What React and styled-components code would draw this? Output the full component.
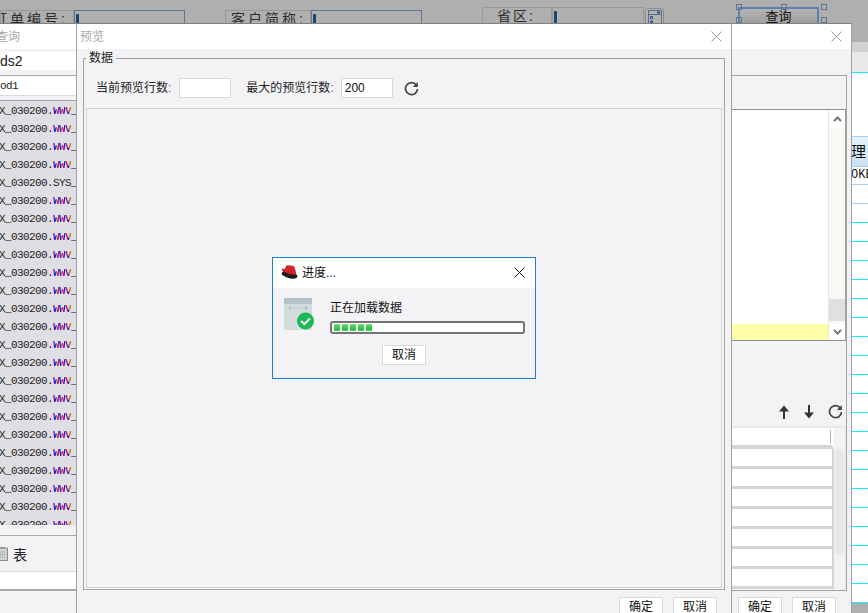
import styled, { createGlobalStyle } from "styled-components"

const GlobalStyle = createGlobalStyle`
    html, body {
        margin: 0;
        padding: 0;
        background: #afafaf;
    }
    * {
        box-sizing: border-box;
    }
`

const rows = Array.from({ length: 24 }, (_, i) => (i === 4 ? "SYS_" : "WWV_"))
const gridLines = Array.from({ length: 21 }, (_, i) => i)
const tableRows = [21, 20, 20, 20, 20, 20, 20, 20]

const Refresh = ({ size = 15 }) => (
    <svg width={size} height={size} viewBox="0 0 15 15">
        <path d="M12.4 4.2 A6 6 0 1 0 13.5 8" fill="none" stroke="#444" strokeWidth="1.7" />
        <path d="M13.8 1 V6 H8.8 Z" fill="#444" />
    </svg>
)

const Cross = ({ color = "#999", size = 11 }) => (
    <svg width={size} height={size} viewBox="0 0 11 11">
        <path d="M0.5 0.5 L10.5 10.5 M10.5 0.5 L0.5 10.5" stroke={color} strokeWidth="1" fill="none" />
    </svg>
)

const ArrowUp = () => (
    <svg width="12" height="14" viewBox="0 0 12 14">
        <path d="M6 0.5 L11 6.5 H7 V14 H5 V6.5 H1 Z" fill="#333" />
    </svg>
)

const ArrowDown = () => (
    <svg width="12" height="14" viewBox="0 0 12 14">
        <path d="M6 13.5 L11 7.5 H7 V0 H5 V7.5 H1 Z" fill="#333" />
    </svg>
)

const Chevron = ({ down }) => (
    <svg width="9" height="6" viewBox="0 0 9 6">
        <path d={down ? "M1 1 L4.5 4.5 L8 1" : "M1 5 L4.5 1.5 L8 5"} stroke="#777" strokeWidth="2" fill="none" />
    </svg>
)

const RedHat = () => (
    <svg width="17" height="15" viewBox="0 0 17 15">
        <path d="M1 7.5 C0 9 1 10 3 11 C7 13.5 13 15 16 12.5 C17 11 16 9 14 8.5 L3 5.5 Z" fill="#1b1b1b" />
        <path d="M5.5 0.6 C7.5 -0.4 9.5 1 11 0.6 C13 0.2 14.4 3.6 15 7.6 C15.2 9.6 13.6 10 12 9.6 C8 8.8 4.5 7.6 2.5 6.5 C0.8 5.6 0.4 4 1.2 3.2 C3 4.6 3.8 4.2 4.2 3 Z" fill="#d1232a" />
    </svg>
)

const StatusIcon = () => (
    <svg width="31" height="33" viewBox="0 0 31 33">
        <rect x="0" y="0" width="28" height="32" fill="#d5dce0" />
        <rect x="0" y="0" width="28" height="6" fill="#b6c3c9" />
        <path d="M5 10 H23" stroke="#b4bec3" strokeWidth="1" strokeDasharray="2 1" />
        <path d="M7 7.8 L4 10 L7 12.2 Z M21 7.8 L24 10 L21 12.2 Z" fill="#b4bec3" />
        <circle cx="21.5" cy="23" r="8.5" fill="#1bb956" />
        <path d="M17 23 L20.3 26.2 L26 20.5" stroke="#fff" strokeWidth="2" fill="none" />
    </svg>
)

const DocIcon = () => (
    <svg width="9" height="15" viewBox="0 0 9 15">
        <path d="M-2 2 H7.5 V14.5 H-2 Z" fill="#d4d4d4" stroke="#888" strokeWidth="1" />
        <path d="M0 1 H5 V3 H0 Z" fill="#999" />
        <path d="M0 6 H6 M0 8.5 H6 M0 11 H6" stroke="#8a8a8a" strokeWidth="1" strokeDasharray="1 1" />
    </svg>
)

const FormIcon = () => (
    <svg width="19" height="20" viewBox="0 0 19 20">
        <rect x="0.5" y="0.5" width="18" height="19" rx="2" fill="#b4b4b4" stroke="#8d8d8d" />
        <rect x="3.5" y="2.5" width="13" height="15" fill="none" stroke="#56708f" />
        <path d="M3.5 6.5 H16.5" stroke="#56708f" />
        <rect x="12" y="3.5" width="3" height="2" fill="#2b4c70" />
        <rect x="5.5" y="8.5" width="2" height="2" fill="none" stroke="#3f5c7f" />
        <rect x="5.5" y="13" width="2" height="2" fill="none" stroke="#3f5c7f" />
    </svg>
)

export default function App() {
    return (
        <Desktop>
            <GlobalStyle />

            <FormStrip>
                <FieldLabel $width={74} $top={10} $indent={-8} $spacing={3}>订单编号:</FieldLabel>
                <FieldInput $width={111} $top={10}><Caret /></FieldInput>
                <FieldLabel $width={86} $top={10} $gap={40} $indent={5} $spacing={3}>客户简称:</FieldLabel>
                <FieldInput $width={111} $top={10}><Caret /></FieldInput>
                <FieldLabel $width={70} $top={7} $gap={60} $indent={14} $spacing={2}>省区:</FieldLabel>
                <FieldInput $width={92} $top={7} $plain><Caret /></FieldInput>
                <IconSlot><FormIcon /></IconSlot>
                <DesignButton>
                    查询
                    <Handle $x={-4} $y={-5} />
                    <Handle $x={41} $y={-5} />
                    <Handle $x={81} $y={-5} />
                    <Handle $x={-4} $y={8} />
                    <Handle $x={81} $y={8} />
                </DesignButton>
            </FormStrip>

            <SideGrid>
                <SideBand $height={10} $color="#d2d2d2" />
                <SideBand $height={20} $color="#e9e9e9" />
                <SideLine $color="#16f0f5" />
                <SideBand $height={63} $color="#fff" />
                <SideLine $color="#a6d2f6" />
                <SideHeader>理</SideHeader>
                <SideLine $color="#a6d2f6" />
                <SideCell>OKE</SideCell>
                <SideLine $color="#a6d2f6" />
                <SideBand $height={18} $color="#fff" />
                <SideLine $color="#a6d2f6" />
                {gridLines.map((i) => (
                    <GridLineRow key={i}>
                        <SideBand $height={18} $color="#fff" />
                        <SideLine $color="#16f0f5" />
                    </GridLineRow>
                ))}
            </SideGrid>

            <QueryWindow>
                <TitleBar>
                    <GhostTitle $shift={-4}>查询</GhostTitle>
                    <Cross />
                </TitleBar>
                <QueryBody>
                    <LeftPane>
                        <NameField>ds2</NameField>
                        <ModField>od1</ModField>
                        <ObjectList>
                            {rows.map((name, i) => (
                                <ObjectRow key={i}>
                                    X_030200.
                                    {name === "WWV_" ? <Rainbow>WWV</Rainbow> : "SYS"}_
                                </ObjectRow>
                            ))}
                        </ObjectList>
                        <TypeRow>
                            <DocIcon />
                            表
                        </TypeRow>
                        <WhiteField />
                    </LeftPane>
                    <RightPane>
                        <OuterGroup>
                            <SqlBox>
                                <SqlText>
                                    <SqlEmpty />
                                    <SqlSelected />
                                </SqlText>
                                <Scrollbar>
                                    <ScrollButton><Chevron /></ScrollButton>
                                    <ScrollTrack />
                                    <ScrollThumb />
                                    <ScrollButton $down><Chevron down /></ScrollButton>
                                </Scrollbar>
                            </SqlBox>
                            <ArrowBar>
                                <ArrowUp />
                                <ArrowDown />
                                <Refresh />
                            </ArrowBar>
                            <ParamTable>
                                <ParamRows>
                                    {tableRows.map((h, i) => (
                                        <ParamRow key={i} $height={h} $first={i === 0} />
                                    ))}
                                </ParamRows>
                                <ParamScroll>
                                    <ParamThumb />
                                </ParamScroll>
                            </ParamTable>
                        </OuterGroup>
                        <Footer $right={11} $top={6}>
                            <FooterButton>确定</FooterButton>
                            <FooterButton>取消</FooterButton>
                        </Footer>
                    </RightPane>
                </QueryBody>
            </QueryWindow>

            <PreviewWindow>
                <TitleBar>
                    <GhostTitle $shift={3}>预览</GhostTitle>
                    <Cross />
                </TitleBar>
                <PreviewBody>
                    <DataGroup>
                        <GroupTitle>数据</GroupTitle>
                        <LimitRow>
                            <LimitLabel $after={8}>当前预览行数<Colon>:</Colon></LimitLabel>
                            <LimitInput />
                            <LimitLabel $gap={15} $after={7}>最大的预览行数<Colon>:</Colon></LimitLabel>
                            <LimitInput>200</LimitInput>
                            <RefreshSlot><Refresh /></RefreshSlot>
                        </LimitRow>
                        <PreviewPanel />
                    </DataGroup>
                    <Footer $right={14} $top={7}>
                        <FooterButton>确定</FooterButton>
                        <FooterButton>取消</FooterButton>
                    </Footer>
                </PreviewBody>
            </PreviewWindow>

            <ProgressDialog>
                <DialogTitle>
                    <RedHat />
                    <DialogName>进度...</DialogName>
                    <Cross color="#111" />
                </DialogTitle>
                <DialogBody>
                    <StatusIcon />
                    <ProgressColumn>
                        <ProgressText>正在加载数据</ProgressText>
                        <ProgressTrack>
                            {[0, 1, 2, 3, 4].map((i) => <ProgressBlock key={i} />)}
                        </ProgressTrack>
                    </ProgressColumn>
                </DialogBody>
                <DialogFooter>
                    <FooterButton>取消</FooterButton>
                </DialogFooter>
            </ProgressDialog>
        </Desktop>
    )
}

const cjk = `"Liberation Sans", "Noto Sans CJK SC", sans-serif`

const Desktop = styled.div`
    position: relative;
    width: 868px;
    height: 613px;
    overflow: hidden;
    background: #afafaf;
    font-family: ${cjk};
    font-size: 12px;
    color: #222;
`

// designer form behind the dialogs
const FormStrip = styled.div`
    display: flex;
    align-items: flex-start;
    height: 40px;
    overflow: hidden;
`
const FieldLabel = styled.div`
    flex: none;
    width: ${(p) => p.$width}px;
    height: 30px;
    margin-top: ${(p) => p.$top}px;
    margin-left: ${(p) => p.$gap || 0}px;
    text-indent: ${(p) => p.$indent}px;
    border: 1px solid #989898;
    letter-spacing: ${(p) => p.$spacing}px;
    font-size: 14px;
    line-height: 16px;
    color: #2c2c2c;
    white-space: nowrap;
    overflow: hidden;
`
const FieldInput = styled.div`
    flex: none;
    width: ${(p) => p.$width}px;
    height: 30px;
    margin-top: ${(p) => p.$top}px;
    padding: 3px 1px;
    border: 1px solid ${(p) => (p.$plain ? "#989898" : "#5f7695")};
`
const Caret = styled.div`
    width: 3px;
    height: 12px;
    border-radius: 1px;
    background: #17466e;
`
const IconSlot = styled.div`
    flex: none;
    margin: 8px 0 0 1px;
    width: 19px;
`
const DesignButton = styled.div`
    position: relative;
    flex: none;
    width: 81px;
    height: 30px;
    margin: 7px 0 0 74px;
    border: 2px solid #5f82ad;
    background: linear-gradient(#b3b3b3, #8f8f8f);
    text-align: center;
    font-size: 13px;
    line-height: 16px;
    color: #111;
`
const Handle = styled.span`
    position: absolute;
    left: ${(p) => p.$x}px;
    top: ${(p) => p.$y}px;
    width: 6px;
    height: 6px;
    border: 1px solid #5f7695;
`

// grid peeking out on the right of the dialogs
const SideGrid = styled.div`
    position: absolute;
    left: 852px;
    top: 42px;
    width: 16px;
    background: #fff;
`
const SideBand = styled.div`
    height: ${(p) => p.$height}px;
    background: ${(p) => p.$color};
`
const SideLine = styled.div`
    height: 1px;
    background: ${(p) => p.$color};
`
const SideHeader = styled.div`
    height: 29px;
    margin-left: -1px;
    background: linear-gradient(#e8f3fb, #c9e0f1);
    font-size: 15px;
    line-height: 29px;
    color: #111;
`
const SideCell = styled.div`
    height: 17px;
    margin-left: -1px;
    font-family: "Liberation Mono", monospace;
    font-size: 12px;
    line-height: 17px;
    white-space: nowrap;
    overflow: hidden;
    color: #111;
`
const GridLineRow = styled.div``

// windows
const QueryWindow = styled.div`
    position: absolute;
    left: 0;
    top: 23px;
    width: 852px;
    height: 590px;
    display: flex;
    flex-direction: column;
    background: #f3f3f6;
    border-top: 1px solid #808080;
    border-right: 1px solid #a3a3a3;
`
const TitleBar = styled.div`
    flex: none;
    height: 25px;
    display: flex;
    align-items: center;
    justify-content: space-between;
    padding-right: 9px;
    background: #fff;
`
const GhostTitle = styled.div`
    margin-left: ${(p) => p.$shift}px;
    margin-bottom: 2px;
    font-size: 12px;
    color: #a8a8a8;
`
const QueryBody = styled.div`
    flex: 1;
    display: flex;
    min-height: 0;
`
const LeftPane = styled.div`
    flex: none;
    width: 300px;
    padding-top: 3px;
    display: flex;
    flex-direction: column;
`
const NameField = styled.div`
    height: 18px;
    background: #fff;
    font-size: 14px;
    line-height: 19px;
    color: #222;
`
const ModField = styled.div`
    height: 21px;
    margin-top: 5px;
    background: #fff;
    border-top: 1px solid #a8a8a8;
    border-bottom: 1px solid #dcdcdc;
    font-family: "Liberation Mono", monospace;
    font-size: 11px;
    letter-spacing: -0.6px;
    line-height: 20px;
    color: #222;
`
const ObjectList = styled.div`
    height: 425px;
    margin-top: 4px;
    overflow: hidden;
    background: #dfdfe3;
    border-top: 1px solid #a0a0a0;
`
const ObjectRow = styled.div`
    height: 18px;
    font-family: "Liberation Mono", monospace;
    font-size: 11px;
    line-height: 20px;
    letter-spacing: -0.6px;
    text-indent: -1px;
    white-space: nowrap;
    color: #222;
`
const Rainbow = styled.span`
    font-weight: bold;
    background: repeating-linear-gradient(90deg, #d000a0 0 1.5px, #0020e0 1.5px 3px, #b08000 3px 4.5px);
    -webkit-background-clip: text;
    background-clip: text;
    color: transparent;
`
const TypeRow = styled.div`
    height: 36px;
    margin-top: 10px;
    display: flex;
    align-items: center;
    gap: 4px;
    border-top: 1px solid #a8a8a8;
    font-size: 14px;
    color: #222;
`
const WhiteField = styled.div`
    height: 20px;
    background: #fff;
    border-top: 1px solid #dcdcdc;
    border-bottom: 2px solid #a8a8a8;
`
const RightPane = styled.div`
    flex: 1;
    display: flex;
    flex-direction: column;
    padding: 26px 4px 0 20px;
    min-width: 0;
`
const OuterGroup = styled.div`
    flex: none;
    height: 516px;
    padding-top: 33px;
    display: flex;
    flex-direction: column;
    border: 1px solid #a4a496;
    border-top-color: #a0a0a0;
`
const SqlBox = styled.div`
    flex: none;
    height: 232px;
    display: flex;
    border-top: 1px solid #909090;
    border-bottom: 1px solid #909090;
    border-right: 1px solid #a0a0a0;
    background: #fff;
`
const SqlText = styled.div`
    flex: 1;
    display: flex;
    flex-direction: column;
`
const SqlEmpty = styled.div`
    flex: 1;
`
const SqlSelected = styled.div`
    height: 16px;
    background: #ffffaa;
`
const Scrollbar = styled.div`
    flex: none;
    width: 17px;
    display: flex;
    flex-direction: column;
    background: #f8f8f5;
    border-left: 1px solid #ebe8d8;
`
const ScrollButton = styled.div`
    height: ${(p) => (p.$down ? 17 : 18)}px;
    display: flex;
    align-items: center;
    justify-content: center;
    background: #fff;
`
const ScrollTrack = styled.div`
    flex: 1;
`
const ScrollThumb = styled.div`
    height: 22px;
    margin-bottom: 2px;
    background: #e0e0e0;
`
const ArrowBar = styled.div`
    flex: none;
    height: 85px;
    padding: 0 3px 7px 0;
    display: flex;
    align-items: flex-end;
    justify-content: flex-end;
    gap: 13px;
`
const ParamTable = styled.div`
    flex: 1;
    min-height: 0;
    display: flex;
    border-top: 2px solid #e8e8e8;
    border-right: 1px solid #e8e8e8;
    background: #f3f3f6;
`
const ParamRows = styled.div`
    flex: 1;
    display: flex;
    flex-direction: column;
`
const ParamRow = styled.div`
    flex: none;
    height: ${(p) => p.$height}px;
    background: ${(p) =>
        p.$first ? "linear-gradient(#b8b8a8, #b8b8a8) no-repeat right 1px top 2px / 1px 14px, #fff" : "#fff"};
    border-bottom: ${(p) => (p.$first ? 4 : 3)}px solid #d4d4d4;
    border-right: 2px solid ${(p) => (p.$first ? "#fff" : "#d4d4d4")};
`
const ParamScroll = styled.div`
    flex: none;
    width: 11px;
    padding: 21px 1px 0 1px;
`
const ParamThumb = styled.div`
    height: 106px;
    border-radius: 4px;
    background: #e8e8e8;
`
const Footer = styled.div`
    flex: none;
    display: flex;
    justify-content: flex-end;
    gap: 10px;
    margin-top: ${(p) => p.$top}px;
    padding-right: ${(p) => p.$right}px;
`
const FooterButton = styled.div`
    width: 44px;
    height: 20px;
    background: #fff;
    border: 1px solid #d9d9d9;
    text-align: center;
    font-size: 12px;
    line-height: 18px;
    color: #111;
`

const PreviewWindow = styled.div`
    position: absolute;
    left: 76px;
    top: 23px;
    width: 656px;
    height: 590px;
    display: flex;
    flex-direction: column;
    background: #f3f3f6;
    border-top: 1px solid #808080;
    border-left: 1px solid #a3a3a3;
    border-right: 1px solid #a3a3a3;
`
const PreviewBody = styled.div`
    flex: 1;
    min-height: 0;
    display: flex;
    flex-direction: column;
    padding: 9px 0 0 6px;
`
const DataGroup = styled.div`
    position: relative;
    flex: none;
    width: 642px;
    height: 532px;
    padding: 0 2px 1px;
    display: flex;
    flex-direction: column;
    border: 1px solid #a4a496;
`
const GroupTitle = styled.div`
    position: absolute;
    left: 2px;
    top: -9px;
    padding: 0 3px;
    background: #f3f3f6;
    font-size: 12px;
    line-height: 16px;
    color: #222;
`
const LimitRow = styled.div`
    flex: none;
    height: 49px;
    padding: 19px 0 0 10px;
    display: flex;
    align-items: flex-start;
`
const LimitLabel = styled.div`
    margin-left: ${(p) => p.$gap || 0}px;
    margin-right: ${(p) => p.$after}px;
    line-height: 20px;
    white-space: nowrap;
    color: #222;
`
const Colon = styled.span`
    color: #7a4a80;
`
const LimitInput = styled.div`
    width: 52px;
    height: 20px;
    padding-left: 3px;
    background: #fff;
    border: 1px solid #d8d8d8;
    line-height: 18px;
    color: #111;
`
const RefreshSlot = styled.div`
    margin: 3px 0 0 11px;
`
const PreviewPanel = styled.div`
    flex: 1;
    border: 1px solid #d2d2d2;
`

// progress dialog on top
const ProgressDialog = styled.div`
    position: absolute;
    left: 272px;
    top: 257px;
    width: 264px;
    height: 122px;
    display: flex;
    flex-direction: column;
    background: #f3f3f6;
    border: 1px solid #1a7fd0;
`
const DialogTitle = styled.div`
    flex: none;
    height: 30px;
    padding: 0 10px 2px 8px;
    display: flex;
    align-items: center;
    gap: 4px;
    background: #fff;
`
const DialogName = styled.div`
    flex: 1;
    margin-bottom: 1px;
    color: #111;
`
const DialogBody = styled.div`
    flex: none;
    display: flex;
    padding: 10px 10px 0 11px;
    gap: 15px;
`
const ProgressColumn = styled.div`
    flex: 1;
    display: flex;
    flex-direction: column;
`
const ProgressText = styled.div`
    padding-top: 1px;
    height: 18px;
    line-height: 18px;
    color: #111;
`
const ProgressTrack = styled.div`
    width: 195px;
    height: 13px;
    margin-top: 5px;
    padding: 1px 2px;
    display: flex;
    gap: 2px;
    background: #fff;
    border: 2px solid #757575;
    border-radius: 3px;
`
const ProgressBlock = styled.div`
    width: 6px;
    height: 7px;
    background: linear-gradient(#7de08a, #25c43d 60%, #3ad050);
`
const DialogFooter = styled.div`
    flex: none;
    display: flex;
    justify-content: center;
    margin-top: 11px;
`
